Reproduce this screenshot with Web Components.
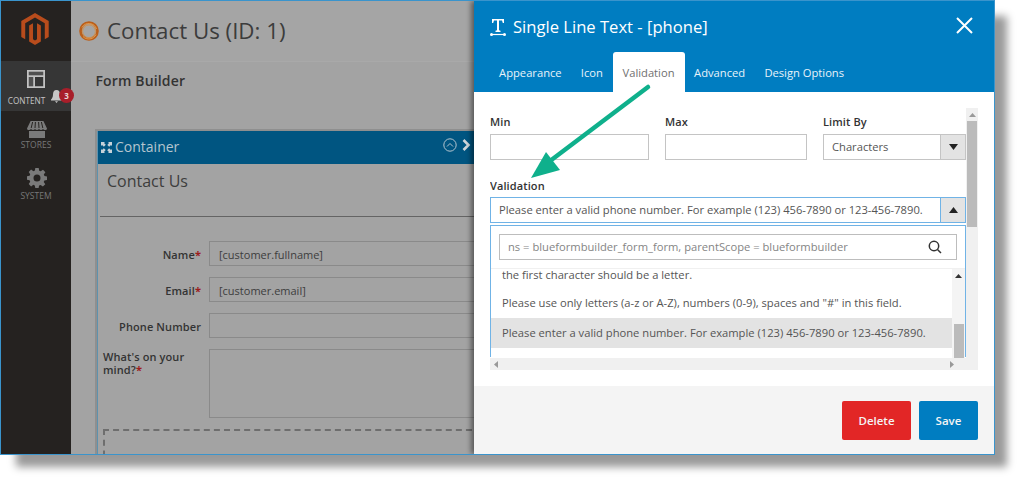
<!DOCTYPE html>
<html lang="en">
<head>
<meta charset="utf-8">
<title>Contact Us</title>
<style>
html,body{margin:0;padding:0;background:#fff;font-family:"Open Sans",sans-serif}
body{width:1024px;height:484px;overflow:hidden}
</style>
</head>
<body>
<app-frame>
  <admin-sidebar slot="sidebar">
    <nav-item label="CONTENT" icon="content" active badge="3"></nav-item>
    <nav-item label="STORES" icon="stores"></nav-item>
    <nav-item label="SYSTEM" icon="system"></nav-item>
  </admin-sidebar>
  <page-main slot="main">
    <builder-container>
      <form-row label="Name" required value="[customer.fullname]"></form-row>
      <form-row label="Email" required value="[customer.email]"></form-row>
      <form-row label="Phone Number"></form-row>
      <form-row label="What's on your|mind?" required area></form-row>
    </builder-container>
  </page-main>
  <side-panel slot="panel"></side-panel>
</app-frame>
<script>
function def(name, css, html){
  customElements.define(name, class extends HTMLElement{
    connectedCallback(){
      if(this.shadowRoot) return;
      const r=this.attachShadow({mode:'open'});
      r.innerHTML='<style>'+css+'</style>'+(typeof html==='function'?html(this):html);
    }
  });
}
const ICONS={
 content:'<svg width="18" height="18" viewBox="0 0 18 18"><path d="M0 0h18v18H0zM1.800 1.800v3.400h14.400V1.800zM1.800 7v9.200h4.400V7zM8 7v9.200h8.200V7z" fill-rule="evenodd" fill="#c2c2c2"/><path d="M2 2h14v3H2zM2 7h4v9H2z" fill="#6b6b6b" opacity=".5"/></svg>',
 stores:'<svg width="20" height="17" viewBox="0 0 20 17"><path d="M3.600 0h12.800L20 7.400c0 1-.9 1.600-2 1.600-.9 0-1.500-.4-2-1-.4.600-1.100 1-2 1s-1.600-.4-2-1c-.4.600-1.100 1-2 1s-1.600-.4-2-1c-.4.600-1.100 1-2 1s-1.500-.4-2-1c-.5.600-1.100 1-2 1-1.100 0-2-.6-2-1.600z" fill="#7a7a7a"/><path d="M5.600 1 4.200 7M8.400 1 8 7M11.600 1 12 7M14.400 1l1.400 6" stroke="#262320" stroke-width="1"/><path d="M2 10h16v7H2z" fill="#7a7a7a"/></svg>',
 system:'<svg width="20" height="20" viewBox="0 0 20 20"><path fill-rule="evenodd" fill="#7a7a7a" d="M8.300 0h3.400l.5 2.700 1.500.6 2.300-1.500 2.400 2.400-1.600 2.200.7 1.600 2.500.5v3.400l-2.600.5-.7 1.500 1.600 2.300-2.400 2.400-2.300-1.600-1.500.6-.5 2.400H8.300l-.5-2.600-1.500-.6-2.200 1.600-2.400-2.400 1.500-2.200-.6-1.500L0 11.700V8.300l2.600-.5.600-1.500-1.500-2.300 2.400-2.400 2.300 1.600 1.500-.6zM10 6.500a3.500 3.500 0 1 0 0 7 3.500 3.500 0 0 0 0-7z"/></svg>'
};
def('nav-item',`
 :host{display:flex;flex-direction:column;align-items:center;position:relative;box-sizing:border-box;height:50px;padding-top:9px;color:#787878;font-size:8.5px;line-height:11px}
 :host([active]){background:#363636;color:#c2c2c2}
 :host([icon=system]){padding-top:8px}
 .ic{height:18px;display:flex;align-items:center;justify-content:center;margin-left:1px}
 :host([active]) .ic{margin-left:0;margin-right:1px}
 .lb{margin-top:6px}
 :host([active]) .lb{margin:7px 19px 0 0;color:#c4c4c4;font-size:8.2px}
 :host([icon=stores]) .lb{margin-top:1px}
 :host([icon=system]) .lb{margin-top:3px}
 .bell{position:absolute;left:50px;top:29px}
 .badge{position:absolute;left:58px;top:27px;width:15px;height:15px;border-radius:50%;background:#a81e2a;color:#e8d5d5;font:700 8px/15px "Open Sans",sans-serif;text-align:center}
`,el=>`<div class="ic">${ICONS[el.getAttribute('icon')]}</div><div class="lb">${el.getAttribute('label')}</div>`+
 (el.hasAttribute('badge')?`<svg class="bell" width="11" height="13" viewBox="0 0 11 13"><path d="M5.500 0C3 0 2 2 2 4.500 2 7 1 8.500 0 9.500v1h11v-1C10 8.500 9 7 9 4.500 9 2 8 0 5.500 0zM4 11.300h3L5.500 13z" fill="#c6c6c6"/></svg><span class="badge">${el.getAttribute('badge')}</span>`:''));

def('admin-sidebar',`
 :host{display:block;width:70px;height:100%;background:#252220}
 .logo{height:60px;display:flex;align-items:center;justify-content:center;box-sizing:border-box;padding-right:2px;padding-bottom:5px}
`,`<div class="logo"><svg width="28" height="32" viewBox="0 0 30 35"><path fill="#b84c1c" d="M15 0 30 8.700v17.600l-4.300 2.500V11.200L15 5 4.300 11.200v17.600L0 26.300V8.700z"/><path fill="#b84c1c" d="M8.600 13.700 12.800 11.200v17.600L15 30l2.200-1.200V11.200l4.200 2.500v17.600L15 35l-6.400-3.700z"/></svg></div><slot></slot>`);

def('form-row',`
 :host{display:grid;grid-template-columns:98px 1fr;column-gap:8px;margin-bottom:11px;font-size:11px;color:#333;font-weight:600}
 :host([area]){margin-bottom:0}
 .l{text-align:right;line-height:27px;height:25px;white-space:nowrap;letter-spacing:.1px}
 :host([area]) .l{text-align:left;line-height:13px;padding-top:1px;height:auto}
 .l b{color:#9c1c1c;font-weight:700}
 .i{height:25px;box-sizing:border-box;border:1px solid #8a8a8a;font-weight:400;line-height:25px;padding-left:9px;font-size:11px;color:#3d3d3d;overflow:visible}
 :host([area]) .i{height:69px}
`,el=>{
 const lines=el.getAttribute('label').split('|');
 const star=el.hasAttribute('required')?'<b>*</b>':'';
 return `<div class="l">${lines.map((t,i)=>`<div>${t}${i===lines.length-1?star:''}</div>`).join('')}</div><div class="i">${el.getAttribute('value')||''}</div>`;
});

def('builder-container',`
 :host{display:block;width:560px;box-sizing:border-box;border:1px solid #8f8f8f;border-bottom:0;border-left-width:2px;border-top-width:2px;background:#a3a3a3}
 .box{border-left:1px solid #5d92ae;height:100%}
 .bar{height:33px;background:#005581;color:#b4c5cf;font-size:14px;line-height:30px;display:flex;align-items:center;gap:3px;padding-left:3px;position:relative}
 .bar span{margin-top:-2px}
 .bar svg.r1{position:absolute;left:345px;top:7px}
 .bar svg.r2{position:absolute;left:364px;top:8px}
 h2{margin:0;font:400 16px/22px "Open Sans",sans-serif;color:#3d3d3d;padding:6px 0 0 9px;height:46px}
 .body{border-top:1.5px solid #646464;margin-left:2px;padding:24px 0 13px 3px}
 .dash{height:60px;border:2px dashed #6e6e6e;width:500px;box-sizing:border-box;margin-top:11px}
`,`<div class="box"><div class="bar"><svg width="11" height="11" viewBox="0 0 11 11"><path fill="#c6d2d9" d="M0 0h4L3 1l1.800 1.800-1.900 1.900L1 3 0 4zM11 0v4L10 3 8.200 4.800 6.300 2.900 8 1 7 0zM0 11V7l1 1 1.800-1.800 1.900 1.900L3 10l1 1zM11 11H7l1-1-1.800-1.800 1.900-1.900L10 8l1-1z"/></svg><span>Container</span>
 <svg class="r1" width="14" height="14" viewBox="0 0 14 14" fill="none" stroke="#b4c5cf"><circle cx="7" cy="7" r="6.200"/><path d="M4 8.500 7 5.500l3 3"/></svg>
 <svg class="r2" width="9" height="12" viewBox="0 0 9 12" fill="none" stroke="#d0d6da" stroke-width="2.600"><path d="M1.500 1 6.500 6l-5 5"/></svg></div>
 <h2>Contact Us</h2><div class="body"><slot></slot><div class="dash"></div></div></div>`);

def('page-main',`
 :host{display:block;height:100%;width:403px;background:#a3a3a3;overflow:hidden}
 header{height:61px;box-sizing:border-box;border-bottom:1px solid #a9a9a9;display:flex;align-items:center;gap:8px;padding-left:8px;color:#3c3c3c;background:#a5a5a5}
 h1{margin:0;font:400 22.3px/32px "Open Sans",sans-serif;white-space:nowrap}
 h3{margin:0;font:600 14px/20px "Open Sans",sans-serif;color:#333;padding:9px 0 0 24.5px;height:39px;letter-spacing:.15px}
 .wrap{padding-left:24px;padding-top:19px;box-sizing:border-box}
`,`<header><svg width="20" height="20" viewBox="0 0 20 20" fill="none"><circle cx="10" cy="10" r="8.500" stroke="#bb5f1a" stroke-width="2.600"/><path d="M3 6.500A8 8 0 0 1 17.500 8M17 13.500A8 8 0 0 1 4 15.500" stroke="#e39a4c" stroke-width="1"/><circle cx="10" cy="10.300" r="6.400" stroke="#d98b3a" stroke-width=".8"/></svg><h1>Contact Us (ID: 1)</h1></header>
 <h3>Form Builder</h3><div class="wrap"><slot></slot></div>`);

def('panel-field',`
 :host{display:block;font-size:11px;color:#333;font-weight:600}
 .l{line-height:15px;height:19px;letter-spacing:.1px}
 :host([low]) .l{height:20px}
 .i{box-sizing:border-box;height:26px;border:1px solid #c4c4c4;font-weight:400;display:flex;align-items:stretch;line-height:24px;color:#555;font-size:11.2px;white-space:nowrap}
 :host([focus]) .i{border-color:#70b3e6}
 .t{flex:1;padding-left:8px}
 .a{width:24px;background:#e3e3e3;border-left:1px solid #c4c4c4;display:flex;align-items:center;justify-content:center}
 :host([focus]) .a{border-left-color:#70b3e6}
`,el=>{
 const sel=el.hasAttribute('select'),up=el.hasAttribute('focus');
 return `<div class="l">${el.getAttribute('label')}</div><div class="i"><div class="t">${el.getAttribute('value')||''}</div>${sel?`<div class="a"><svg width="9" height="6" viewBox="0 0 9 6"><path fill="#222" d="${up?'M4.500 0 9 6H0z':'M0 0h9L4.500 6z'}"/></svg></div>`:''}</div>`;
});

def('drop-list',`
 :host{display:block;box-sizing:border-box;height:132px;border:1px solid #70b3e6;border-bottom:0;margin-top:2px;background:#fff;font-size:11.2px;color:#555}
 .s{margin:8px 8px 0;height:26px;box-sizing:border-box;border:1px solid #bdbdbd;display:flex;align-items:center;justify-content:space-between;padding:0 14px 0 8px;color:#858585;line-height:24px}
 .list{display:grid;grid-template-columns:1fr 13px;margin-top:8px;height:89px;overflow:hidden;border-top:1px solid #f0f0f0}
 .o{height:30px;line-height:30px;padding-left:11px;white-space:nowrap;box-sizing:border-box}
 .o.first{height:19px;line-height:11px}
 .o.sel{background:#e3e3e3}
 .bar{background:#f4f4f4;display:flex;flex-direction:column;align-items:center;justify-content:space-between;position:relative;padding:5px 0;box-sizing:border-box}
 .thumb{position:absolute;left:2px;right:1px;top:55px;height:34px;background:#bbb}
`,`<div class="s"><span>ns = blueformbuilder_form_form, parentScope = blueformbuilder</span><svg width="14" height="14" viewBox="0 0 14 14" fill="none" stroke="#333" stroke-width="1.500"><circle cx="6" cy="6" r="4.700"/><path d="m9.500 9.500 3.500 3.500"/></svg></div>
<div class="list"><div><div class="o first">the first character should be a letter.</div><div class="o">Please use only letters (a-z or A-Z), numbers (0-9), spaces and "#" in this field.</div><div class="o sel">Please enter a valid phone number. For example (123) 456-7890 or 123-456-7890.</div></div>
<div class="bar"><svg width="7" height="4" viewBox="0 0 7 4"><path fill="#333" d="M3.500 0 7 4H0z"/></svg><div class="thumb"></div><svg width="7" height="4" viewBox="0 0 7 4"><path fill="#333" d="M0 0h7L3.500 4z"/></svg></div></div>`);

def('side-panel',`
 :host{display:flex;flex-direction:column;width:520px;height:100%;background:#fff;box-shadow:-3px 0 5px rgba(0,0,0,.45);position:relative}
 .head{height:91px;background:#007dc1;color:#fff;box-sizing:border-box;position:relative;display:flex;flex-direction:column}
 .title{display:flex;align-items:center;gap:7px;height:51px;box-sizing:border-box;padding:1px 0 0 16px;font-size:16.6px;line-height:24px}
 .x{position:absolute;right:21px;top:16px}
 .tabs{display:flex;padding-left:15.5px;font-size:11.2px;height:40px;line-height:41px;color:#e8f3fa}
 .tabs span{padding:0 9.6px;white-space:nowrap}
 .tabs .on{background:#fff;color:#707070;border-radius:3px 3px 0 0;padding:0 10px}
 .body{flex:1;position:relative;padding:16px}
 .scroll{height:262px;display:grid;grid-template-columns:1fr 12px;grid-template-rows:1fr 12px;background:#f0f0f0;width:488px}
 .pane{background:#fff;overflow:hidden;padding-top:6px}
 .row{display:grid;grid-template-columns:159px 142px 143px;column-gap:16px;height:52px;margin-bottom:12px}
 .vb{grid-row:1/3;grid-column:2;position:relative;display:flex;justify-content:center;padding-top:5px;box-sizing:border-box}
 .vt{position:absolute;left:1px;right:1px;top:13px;height:106px;background:#bbb}
 .hb{display:flex;justify-content:space-between;align-items:center;padding:0 3px 0 4px}
 .foot{height:68px;background:#f4f4f4;box-sizing:border-box;display:flex;justify-content:flex-end;align-items:flex-start;gap:8px;padding:15px 16px 0 0}
 .btn{height:39px;border-radius:2px;color:#f4f4f4;font-weight:600;font-size:11.5px;line-height:39px;text-align:center}
 .del{width:69px;background:#e22626}
 .sv{width:59px;background:#007dc1}
 .arrow{position:absolute;left:40px;top:74px;pointer-events:none}
`,`<div class="head"><div class="title"><svg width="16" height="17" viewBox="0 0 16 17"><path fill="#fff" d="M2 0h12v4h-1.200L12 1.500H9v9.700l1.500.5V13h-5v-1.300l1.500-.5V1.500H4L3.200 4H2z"/><path stroke="#fff" stroke-width="1.200" d="M1 15.500h14" fill="none"/><circle cx="1.500" cy="15.500" r="1.500" fill="#fff"/><circle cx="14.500" cy="15.500" r="1.500" fill="#fff"/></svg><span>Single Line Text - [phone]</span></div>
 <svg class="x" width="17" height="17" viewBox="0 0 17 17" stroke="#fff" stroke-width="2" fill="none"><path d="m1 1 15 15M16 1 1 16"/></svg>
 <div class="tabs"><span>Appearance</span><span>Icon</span><span class="on">Validation</span><span>Advanced</span><span>Design Options</span></div></div>
 <div class="body"><div class="scroll"><div class="pane">
   <div class="row"><panel-field low label="Min"></panel-field><panel-field low label="Max"></panel-field><panel-field low label="Limit By" value="Characters" select></panel-field></div>
   <div style="width:476px"><panel-field label="Validation" select focus value="Please enter a valid phone number. For example (123) 456-7890 or 123-456-7890."></panel-field><drop-list></drop-list></div>
  </div>
  <div class="vb"><svg width="7" height="4" viewBox="0 0 7 4"><path fill="#999" d="M3.500 0 7 4H0z"/></svg><div class="vt"></div></div>
  <div class="hb"><svg width="4" height="7" viewBox="0 0 4 7"><path fill="#999" d="M4 0v7L0 3.500z"/></svg><svg width="4" height="7" viewBox="0 0 4 7" style="margin-right:9px"><path fill="#999" d="M0 0v7l4-3.500z"/></svg></div>
 </div></div>
 <div class="foot"><div class="btn del">Delete</div><div class="btn sv">Save</div></div>
 <svg class="arrow" width="190" height="120" viewBox="0 0 190 120"><path d="M134 12 36 86" stroke="#0fb08c" stroke-width="4.500" stroke-linecap="round" fill="none"/><path d="M17 103 46 95 32 77z" fill="#0fb08c"/></svg>`);

def('app-frame',`
 :host{display:flex;width:995px;height:455px;box-sizing:border-box;border:1px solid #3a94cc;box-shadow:14px 14px 8px -2px rgba(0,0,0,.4);background:#a3a3a3}
 .clip{display:flex;width:100%;height:100%;overflow:hidden}
`,`<div class="clip"><slot name="sidebar"></slot><slot name="main"></slot><slot name="panel"></slot></div>`);
</script>
</body>
</html>
